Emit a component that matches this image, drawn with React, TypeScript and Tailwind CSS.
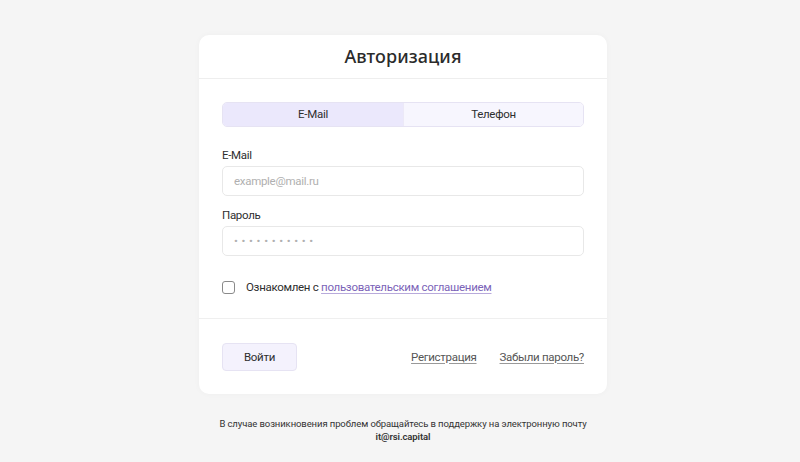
import { type FC } from 'react';

const App: FC = () => {
  return (
    <div className="min-h-[462px] bg-[#f5f5f5] pt-[35px] pl-[6px] font-['Roboto',sans-serif] text-[#2e2e2e]">
      <div className="w-[408px] mx-auto bg-white rounded-[10px] shadow-[0_0_6px_rgba(0,0,0,0.03)]">
        {/* Header */}
        <div className="h-[44px] flex items-center justify-center border-b border-[#eeeeee]">
          <h1 className="font-['Noto_Sans',sans-serif] text-[18px] font-medium text-[#2b2b2b] tracking-[0.1px]">Авторизация</h1>
        </div>

        {/* Body */}
        <div className="px-[23px] pt-[23px] pb-[22px] border-b border-[#efefef] text-[11.5px] tracking-[-0.3px]">
          <div className="grid grid-cols-2 h-[25px] rounded-[5px] border border-[#e6e3f3] overflow-hidden">
            <button className="bg-[#ebe8fc] text-[#2e2e2e]">E-Mail</button>
            <button className="bg-[#f7f6fe] text-[#2e2e2e] border-l border-[#ece9f7]">Телефон</button>
          </div>

          <label className="block mt-[20px] mb-[3px] text-[#2e2e2e] leading-[16px]">E-Mail</label>
          <input
            className="w-full h-[30px] rounded-[5px] border border-[#e8e8e8] px-[11px] outline-none placeholder:text-[#b0b0b0]"
            placeholder="example@mail.ru"
          />

          <label className="block mt-[11px] mb-[3px] text-[#2e2e2e] leading-[16px]">Пароль</label>
          <input
            type="password"
            className="w-full h-[30px] rounded-[5px] border border-[#e8e8e8] px-[11px] outline-none placeholder:text-[#b0b0b0] placeholder:tracking-[0.4px]"
            placeholder="• • • • • • • • • • •"
          />

          <div className="flex items-center mt-[23px] text-[#2e2e2e]">
            <span className="w-[13px] h-[13px] rounded-[3px] border border-[#8a8a8a] mr-[11px]" />
            <span>
              Ознакомлен с{' '}
              <a href="#" className="text-[#7b63b8] underline decoration-[#b8aadb] underline-offset-2">
                пользовательским соглашением
              </a>
            </span>
          </div>
        </div>

        {/* Footer */}
        <div className="px-[23px] pt-[24px] pb-[23px] flex items-center justify-between text-[11.5px] tracking-[-0.3px]">
          <button className="w-[75px] h-[28px] rounded-[4px] bg-[#f4f2fd] border border-[#e6e3f3] text-[#2e2e2e]">
            Войти
          </button>
          <div className="flex items-center gap-[23px] text-[#555]">
            <a href="#" className="underline underline-offset-2 decoration-[#999]">Регистрация</a>
            <a href="#" className="underline underline-offset-2 decoration-[#999]">Забыли пароль?</a>
          </div>
        </div>
      </div>

      <div className="mt-[23px] text-center text-[9.5px] tracking-[-0.1px] leading-[13px] text-[#333]">
        <p>В случае возникновения проблем обращайтесь в поддержку на электронную почту</p>
        <p className="font-semibold">it@rsi.capital</p>
      </div>
    </div>
  );
};

export default App;
